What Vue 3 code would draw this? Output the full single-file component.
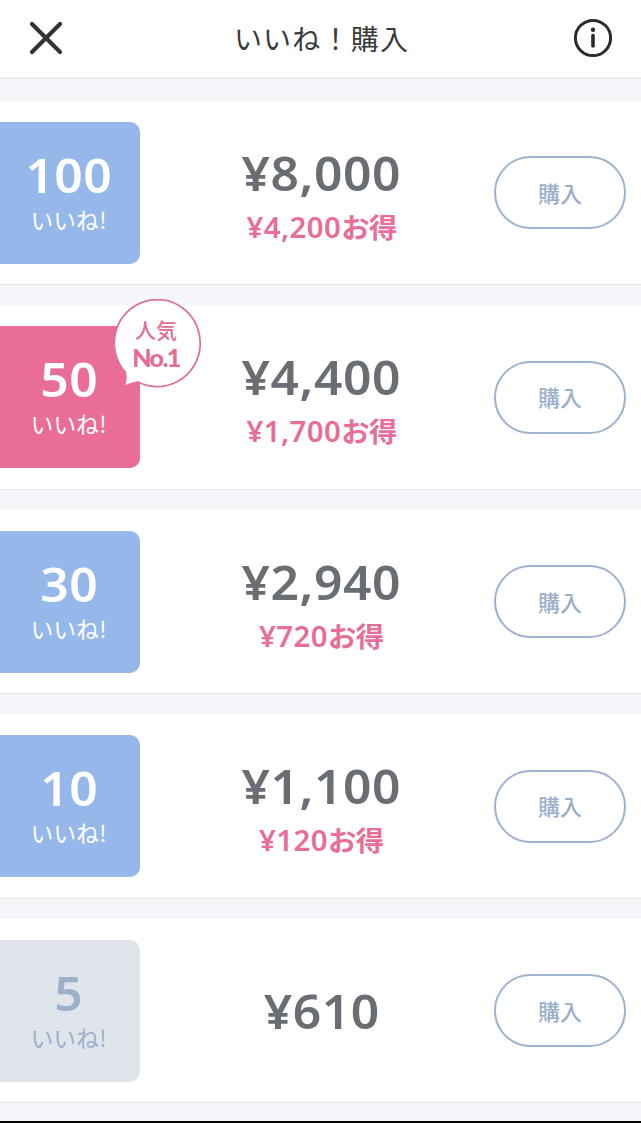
<template>
  <div class="page">
    <header class="header">
      <button class="icon-button" aria-label="閉じる">
        <svg width="34" height="34" viewBox="0 0 34 34">
          <path d="M3 3 L31 31 M31 3 L3 31" fill="none" stroke="#333" stroke-width="4.2" stroke-linecap="round" />
        </svg>
      </button>
      <h1 class="title">いいね！購入</h1>
      <button class="icon-button" aria-label="情報">
        <svg width="40" height="40" viewBox="0 0 40 40">
          <circle cx="20" cy="20" r="17.6" fill="none" stroke="#2b2b2b" stroke-width="3" />
          <circle cx="20" cy="11.7" r="2.2" fill="#2b2b2b" />
          <path d="M20 17.6 V28" fill="none" stroke="#2b2b2b" stroke-width="3.6" stroke-linecap="round" />
        </svg>
      </button>
    </header>

    <main class="plans">
      <section v-for="plan in plans" :key="plan.count" class="plan">
        <div class="tile" :class="plan.color">
          <span class="count">{{ plan.count }}</span>
          <span class="unit">いいね!</span>
          <div v-if="plan.popular" class="badge">
            <svg class="bubble" width="90" height="92" viewBox="0 0 90 92">
              <path
                d="M13 74 A43 43.5 0 1 1 24 82.5 Q18 83 12.5 86 Q14.5 80 13 74 Z"
                fill="#fff"
              />
              <path d="M13 74 A43 43.5 0 1 1 24 82.5" fill="none" stroke="#dc7398" stroke-width="1.8" />
            </svg>
            <span class="badge-top">人気</span>
            <span class="badge-bottom">No.1</span>
          </div>
        </div>
        <div class="price-box">
          <span class="price">¥{{ plan.price }}</span>
          <span v-if="plan.saving" class="saving">¥{{ plan.saving }}<span class="saving-label">お得</span></span>
        </div>
        <button class="buy">購入</button>
      </section>
    </main>
    <div class="bottom-bar"></div>
  </div>
</template>

<script setup>
const plans = [
  { count: 100, price: '8,000', saving: '4,200', color: 'blue' },
  { count: 50, price: '4,400', saving: '1,700', color: 'pink', popular: true },
  { count: 30, price: '2,940', saving: '720', color: 'blue' },
  { count: 10, price: '1,100', saving: '120', color: 'blue' },
  { count: 5, price: '610', saving: '', color: 'gray' }
]
</script>

<style>
body {
  margin: 0;
  background: #f5f6f9;
}
</style>

<style scoped>
.page {
  display: flex;
  flex-direction: column;
  width: 641px;
  height: 1123px;
  overflow: hidden;
  background: #f5f6f9;
  font-family: 'Noto Sans', 'Noto Sans CJK JP', sans-serif;
}

.header {
  flex: none;
  display: flex;
  align-items: center;
  justify-content: space-between;
  box-sizing: border-box;
  height: 78.5px;
  padding: 0 28px 0 29px;
  background: #fff;
  border-bottom: 2px solid #e9eaee;
}

.icon-button {
  display: flex;
  padding: 0;
  border: none;
  background: none;
}

.title {
  margin: 0 0 0 7px;
  color: #3a3a3a;
  font-family: 'Noto Sans CJK JP', sans-serif;
  font-size: 28px;
  font-weight: 400;
  line-height: 40px;
  letter-spacing: 1.2px;
}

.plans {
  flex: 1;
  display: flex;
  flex-direction: column;
  gap: 20.5px;
  padding-top: 22.5px;
}

.plan {
  flex: none;
  display: grid;
  grid-template-columns: 139.5px 1fr 132px;
  align-items: center;
  box-sizing: border-box;
  height: 184px;
  padding-right: 15px;
  background: #fff;
  border-bottom: 1px solid #e3e5ea;
}

.tile {
  position: relative;
  display: flex;
  flex-direction: column;
  align-items: center;
  box-sizing: border-box;
  height: 142px;
  padding: 29px 2px 0 0;
  border-radius: 0 10px 10px 0;
  color: #fff;
}

.blue {
  background: #96b7e9;
}

.pink {
  background: #ea6d96;
}

.gray {
  background: #e0e5eb;
  color: #9bb0cb;
}

.count {
  font-size: 47px;
  font-weight: 600;
  line-height: 48px;
  letter-spacing: 0.3px;
  transform: scaleX(1.06);
}

.unit {
  font-family: 'Noto Sans CJK JP', sans-serif;
  font-size: 22.5px;
  line-height: 30px;
  margin-top: 5px;
  letter-spacing: 0.3px;
}

.badge {
  position: absolute;
  top: -27px;
  left: 112.5px;
  display: flex;
  flex-direction: column;
  align-items: center;
  box-sizing: border-box;
  width: 90px;
  height: 92px;
  padding: 18px 3px 0 0;
  color: #e36c95;
}

.bubble {
  position: absolute;
  top: 0;
  left: 0;
}

.badge-top {
  position: relative;
  font-size: 21px;
  font-weight: 500;
  line-height: 26px;
}

.badge-bottom {
  position: relative;
  font-family: Lato, sans-serif;
  font-size: 25px;
  font-weight: 900;
  line-height: 28px;
  letter-spacing: -1.6px;
}

.price-box {
  display: flex;
  flex-direction: column;
  align-items: center;
  padding-left: 10px;
}

.price {
  color: #696e74;
  font-size: 47px;
  font-weight: 600;
  line-height: 60px;
  letter-spacing: 0.5px;
  transform: scaleX(1.06);
}

.saving {
  color: #e76e98;
  font-size: 28px;
  font-weight: 600;
  line-height: 40px;
  margin-top: 4px;
  margin-bottom: -4px;
  letter-spacing: 0.4px;
  transform: scaleX(1.05);
}

.saving-label {
  font-family: 'Noto Sans CJK JP', sans-serif;
  font-size: 27px;
  font-weight: 700;
  letter-spacing: -0.5px;
}

.buy {
  height: 73px;
  padding: 0 0 2px;
  border: 2px solid #9db3ce;
  border-radius: 37px;
  background: #fff;
  color: #9aafca;
  font-family: 'Noto Sans CJK JP', sans-serif;
  font-size: 22px;
  font-weight: 500;
}

.bottom-bar {
  flex: none;
  height: 2px;
  background: #000;
}
</style>
